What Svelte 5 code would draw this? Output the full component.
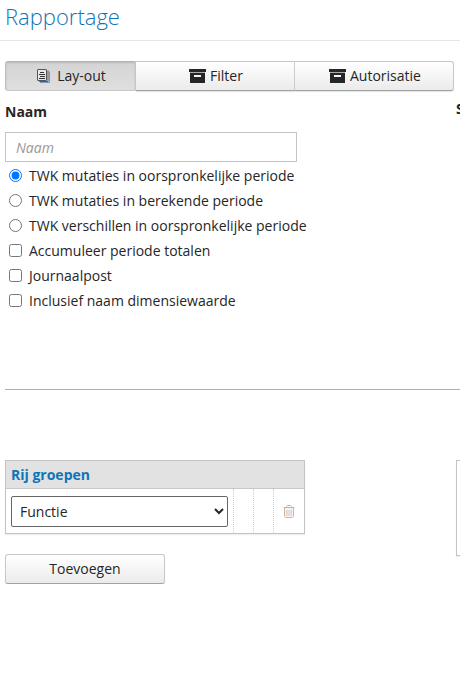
<script lang="ts">
  type Tab = { id: string; label: string; icon: 'pages' | 'archive' };

  const tabs: Tab[] = [
    { id: 'layout', label: 'Lay-out', icon: 'pages' },
    { id: 'filter', label: 'Filter', icon: 'archive' },
    { id: 'auth', label: 'Autorisatie', icon: 'archive' },
  ];

  const modes = [
    'TWK mutaties in oorspronkelijke periode',
    'TWK mutaties in berekende periode',
    'TWK verschillen in oorspronkelijke periode',
  ];

  let activeTab = $state('layout');
  let name = $state('');
  let mode = $state(0);
  let options = $state([
    { label: 'Accumuleer periode totalen', checked: false },
    { label: 'Journaalpost', checked: false },
    { label: 'Inclusief naam dimensiewaarde', checked: false },
  ]);
  let rowGroups = $state(['Functie']);

  function addGroup() {
    rowGroups.push('Functie');
  }

  function removeGroup(i: number) {
    rowGroups.splice(i, 1);
  }
</script>

<div class="page">
  <header><h1>Rapportage</h1></header>

  <main>
    <nav class="tabs">
      {#each tabs as tab (tab.id)}
        <button
          type="button"
          class="tab {tab.icon}"
          class:active={activeTab === tab.id}
          onclick={() => { activeTab = tab.id; }}
        >
          {#if tab.icon === 'pages'}
            <svg width="13" height="14" viewBox="0 0 13 14" aria-hidden="true">
              <path d="M3 13.5h9.5V2.5" fill="none" stroke="#6f9cc8" />
              <path d="M2.5 12v.5h8.5V1.5" fill="none" stroke="#555b66" />
              <rect x=".5" y=".5" width="9" height="11" rx=".5" fill="#e8e8e8" stroke="#55555c" />
              <path d="M3 3.5h4M2 5.5h6M3 7.5h5M2 9.5h6" stroke="#333" />
            </svg>
          {:else}
            <svg width="17" height="14" viewBox="0 0 17 14" aria-hidden="true">
              <path d="M0 0h17v3H0z" fill="#262626" />
              <path d="M1 3h15v1H1z" fill="#aaa" />
              <path fill-rule="evenodd" d="M1 4h15v10H1zM5 6v2h7V6z" fill="#262626" />
            </svg>
          {/if}
          <span>{tab.label}</span>
        </button>
      {/each}
    </nav>

    <section class="columns settings">
      <div>
        <label class="heading" for="name">Naam</label>
        <input id="name" class="name" type="text" placeholder="Naam" bind:value={name} />
        {#each modes as label, i}
          <label class="option">
            <input type="radio" name="mode" value={i} bind:group={mode} />
            {label}
          </label>
        {/each}
        {#each options as option}
          <label class="option">
            <input type="checkbox" bind:checked={option.checked} />
            {option.label}
          </label>
        {/each}
      </div>
      <div class="side-label">S</div>
    </section>

    <section class="columns groups">
      <div>
        <table>
          <colgroup>
            <col />
            <col class="move" />
            <col class="move" />
            <col class="remove" />
          </colgroup>
          <thead>
            <tr><th colspan="4">Rij groepen</th></tr>
          </thead>
          <tbody>
            {#each rowGroups as _, i}
              <tr>
                <td class="field">
                  <select bind:value={rowGroups[i]} aria-label="Rij groepen">
                    <option>Functie</option>
                  </select>
                </td>
                <td></td>
                <td></td>
                <td>
                  <button type="button" class="trash" aria-label="Verwijderen" onclick={() => removeGroup(i)}>
                    <svg width="12" height="13" viewBox="0 0 12 13" aria-hidden="true">
                      <path d="M3.500 2.500v-1l1-1h3l1 1v1M.5 2.500h11" fill="none" stroke="#b9b5b3" />
                      <path d="M1.500 3v8.500l1 1h7l1-1V3" fill="#fbf1ea" stroke="#c4bab5" />
                      <path d="M3.500 5v6M8.500 5v6" stroke="#f0d3bf" />
                      <path d="M5 5v6M7 5v6" stroke="#cdd0e2" />
                    </svg>
                  </button>
                </td>
              </tr>
            {/each}
          </tbody>
        </table>
        <button type="button" class="add" onclick={addGroup}>Toevoegen</button>
      </div>
      <div class="side-box"></div>
    </section>
  </main>
</div>

<style>
  :global(body) { margin: 0; background: #fff; }
  .page {
    overflow: hidden;
    font: 14px/20px "Open Sans", sans-serif;
    color: #262626;
  }
  header { border-bottom: 1px solid #e5e5e5; padding: 1px 5px 9px; }
  h1 { margin: 0; font-size: 22px; line-height: 30px; font-weight: 300; color: #0f75b5; }
  main { padding: 20px 0 0 5px; }
  button, input, select { font: inherit; color: inherit; box-sizing: border-box; }

  .tabs {
    display: grid;
    grid-template-columns: 131fr 159fr 159fr;
    margin-right: 6px;
  }
  .tab, .add {
    height: 30px;
    padding: 0;
    border: 1px solid #c8c8c8;
    border-bottom-color: #a2a2a2;
    background: linear-gradient(#fff, #ebebeb);
    box-shadow: 0 1px 1px #e4e4e4;
    cursor: pointer;
  }
  .tab { display: flex; align-items: center; justify-content: center; gap: 4px; padding-left: 2px; }
  .tab.pages { gap: 7px; }
  .tab + .tab { border-left: 0; }
  .tab:first-child { border-radius: 3px 0 0 3px; }
  .tab:last-child { border-radius: 0 3px 3px 0; }
  .tab.active {
    border-color: #b5b5b5 #c0c0c0 #c8c8c8;
    background: linear-gradient(#d4d4d4, #dfdfdf);
    box-shadow: inset 0 1px 2px #b8b8b8;
  }

  .columns { display: grid; grid-template-columns: calc(100% - 4px) 300px; }
  .settings { height: 298px; border-bottom: 1px solid #b0b0b0; }
  .heading { display: block; padding: 11px 0 10px; font-weight: 700; }
  .name {
    display: block;
    width: 292px;
    height: 30px;
    padding: 0 10px;
    border: 1px solid #c4c4c4;
    margin-bottom: 1px;
  }
  .name::placeholder { color: #999; font-style: italic; opacity: 1; }
  .option { display: flex; align-items: center; height: 25px; }
  .option input { width: 13px; height: 13px; margin: 0 7px 0 4px; }
  .side-label { padding-top: 8px; font-weight: 700; }

  .groups { padding-top: 70px; }
  table {
    width: 300px;
    border: 1px solid #c4c4c4;
    border-spacing: 0;
    table-layout: fixed;
    box-shadow: 0 1px 1px #eee;
  }
  th {
    height: 27px;
    padding: 0 5px;
    border-bottom: 1px solid #c8c8c8;
    background: #e2e2e2;
    color: #0f75b5;
    text-align: left;
  }
  td { height: 44px; padding: 0; }
  td + td { border-left: 1px dotted #d0d0d0; }
  .field { padding: 0 5px; }
  .move { width: 20px; }
  .remove { width: 31px; }
  .trash { display: block; margin: 0 auto; padding: 0; border: 0; background: none; cursor: pointer; }
  .trash svg { display: block; }
  select {
    display: block;
    width: 217px;
    height: 31px;
    padding: 0 4px;
    border: 1px solid #666;
    border-radius: 2px;
    background: #fff;
  }
  .add { display: block; width: 160px; margin-top: 20px; border-radius: 3px; }
  .side-box {
    height: 94px;
    border: 1px solid #c4c4c4;
    box-shadow: 0 1px 1px #eee;
  }
</style>
